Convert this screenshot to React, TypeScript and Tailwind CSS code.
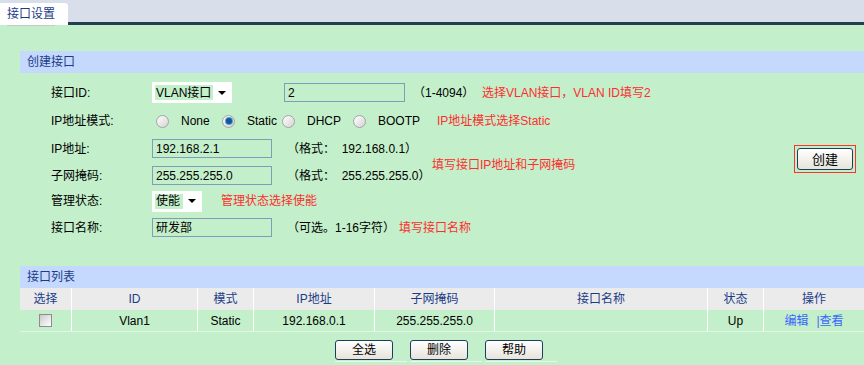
import React from 'react';

const labelCls = 'w-[101px] shrink-0 text-black';
const inputCls = 'h-[19px] border border-[#7f9db9] pl-[3px] flex items-center text-black';
const redCls = 'text-[#ff2d2d]';

function Select({ value, width, hlWidth }: { value: string; width: string; hlWidth: string }) {
  return (
    <div className={`flex h-[21px] items-center bg-white pl-[3px] ${width}`}>
      <span className={`flex h-[15px] items-center bg-[#c3efca] pl-[1px] text-black ${hlWidth}`}>{value}</span>
      <span className="ml-auto mr-[6px] h-0 w-0 border-x-[4px] border-t-[4px] border-x-transparent border-t-black" />
    </div>
  );
}

function Radio({ label, checked, width }: { label: string; checked?: boolean; width: string }) {
  return (
    <div className={`flex items-center ${width}`}>
      <span className="flex h-[13px] w-[13px] items-center justify-center rounded-full border border-[#a4a4a4] bg-gradient-to-br from-white to-[#d4d4d4]">
        {checked && <span className="h-[6px] w-[6px] rounded-full bg-[#0d5a9a] ring-1 ring-[#5d9bd0]" />}
      </span>
      <span className="ml-[12px] text-black">{label}</span>
    </div>
  );
}

function Button({ label }: { label: string }) {
  return (
    <div className="w-[72px] border-b border-[#eaf7ec] pb-[1px]">
      <button className="flex h-[20px] w-[58px] items-center justify-center rounded-[3px] border border-[#1c3f5e] bg-gradient-to-b from-white to-[#e6e4da] text-black">
        {label}
      </button>
    </div>
  );
}

const cols = [
  { name: '选择', w: 'w-[51px]' },
  { name: 'ID', w: 'w-[126px]' },
  { name: '模式', w: 'w-[56px]' },
  { name: 'IP地址', w: 'w-[121px]' },
  { name: '子网掩码', w: 'w-[120px]' },
  { name: '接口名称', w: 'w-[213px]' },
  { name: '状态', w: 'w-[56px]' },
  { name: '操作', w: 'flex-1' },
];

export default function App() {
  return (
    <div className="h-[365px] w-[864px] overflow-hidden bg-[#c3efca] font-['Liberation_Sans','Noto_Sans_CJK_SC',sans-serif] text-[12px] leading-none">
      {/* top tab bar */}
      <div className="flex h-[25px] bg-[#d9dfea]">
        <div className="mt-[3px] w-[68px] rounded-tr-[3px] bg-white pl-[7px]">
          <span className="mt-[4px] block w-[48px] border-b border-[#c9c9c9] pb-[3px] leading-[15px] text-[#1b3d87]">接口设置</span>
        </div>
        <div className="flex-1 border-b-[3px] border-[#22404f]" />
      </div>

      {/* 创建接口 */}
      <div className="ml-[20px] mt-[26px] flex h-[22px] items-center bg-[#c5d8fe] pl-[7px] text-[#1b3d87]">创建接口</div>

      <div className="flex">
        <div className="flex flex-1 flex-col pl-[51px]">
          <div className="mt-[9px] flex h-[21px] items-center">
            <span className={labelCls}>接口ID:</span>
            <Select value="VLAN接口" width="w-[80px]" hlWidth="w-[58px]" />
            <div className={`${inputCls} ml-[52px] w-[121px]`}>2</div>
            <span className="ml-[8px] w-[69px] text-black">（1-4094）</span>
            <span className={redCls}>选择VLAN接口，VLAN ID填写2</span>
          </div>

          <div className="flex h-[36px] items-center">
            <span className={labelCls}>IP地址模式:</span>
            <div className="ml-[4px] flex items-center">
              <Radio label="None" width="w-[66px]" />
              <Radio label="Static" checked width="w-[60px]" />
              <Radio label="DHCP" width="w-[71px]" />
              <Radio label="BOOTP" width="w-[84px]" />
            </div>
            <span className={redCls}>IP地址模式选择Static</span>
          </div>

          <div className="flex items-center">
            <div className="flex w-[381px] flex-col">
              <div className="flex h-[19px] items-center">
                <span className={labelCls}>IP地址:</span>
                <div className={`${inputCls} w-[120px]`}>192.168.2.1</div>
                <span className="ml-[15px] whitespace-pre text-black">（格式：  192.168.0.1）</span>
              </div>
              <div className="mt-[8px] flex h-[19px] items-center">
                <span className={labelCls}>子网掩码:</span>
                <div className={`${inputCls} w-[120px]`}>255.255.255.0</div>
                <span className="ml-[15px] whitespace-pre text-black">（格式：  255.255.255.0）</span>
              </div>
            </div>
            <span className={`${redCls} mt-[5px]`}>填写接口IP地址和子网掩码</span>
          </div>

          <div className="mt-[6px] flex h-[20px] items-center">
            <span className={labelCls}>管理状态:</span>
            <Select value="使能" width="w-[50px]" hlWidth="w-[28px]" />
            <span className={`${redCls} ml-[19px]`}>管理状态选择使能</span>
          </div>

          <div className="mt-[7px] flex h-[19px] items-center">
            <span className={labelCls}>接口名称:</span>
            <div className={`${inputCls} w-[120px]`}>研发部</div>
            <span className="ml-[15px] w-[112px] text-black">（可选。1-16字符）</span>
            <span className={redCls}>填写接口名称</span>
          </div>
        </div>

        <div className="w-[70px] pr-[8px] pt-[72px]">
          <div className="border border-[#ff3030] p-[2px]">
            <button className="flex h-[22px] w-full items-center justify-center rounded-[3px] border border-[#1c3f5e] bg-gradient-to-b from-white to-[#e6e4da] text-[13px] text-black">
              创建
            </button>
          </div>
        </div>
      </div>

      {/* 接口列表 */}
      <div className="ml-[20px] mt-[29px]">
        <div className="flex h-[22px] items-center bg-[#c5d8fe] pl-[7px] text-[#1b3d87]">接口列表</div>
        <div className="flex h-[22px] bg-[#ebebeb] text-[#1b3d87]">
          {cols.map((c, i) => (
            <div key={c.name} className={`flex items-center justify-center ${c.w} ${i > 0 ? 'border-l border-white' : ''}`}>
              {c.name}
            </div>
          ))}
        </div>
        <div className="flex h-[22px] border-b border-[#e3f3e6] text-black">
          <div className="flex w-[51px] items-center justify-center">
            <span className="h-[13px] w-[13px] border border-[#8d8d8d] bg-gradient-to-br from-[#c9c9c9] to-white p-[2px]">
              <span className="block h-full w-full bg-gradient-to-br from-[#d6d6d6] to-[#f5f5f5]" />
            </span>
          </div>
          <div className="flex w-[126px] items-center justify-center border-l border-white">Vlan1</div>
          <div className="flex w-[56px] items-center justify-center border-l border-white">Static</div>
          <div className="flex w-[121px] items-center justify-center border-l border-white">192.168.0.1</div>
          <div className="flex w-[120px] items-center justify-center border-l border-white">255.255.255.0</div>
          <div className="w-[213px] border-l border-white" />
          <div className="flex w-[56px] items-center justify-center border-l border-white">Up</div>
          <div className="flex flex-1 items-center justify-center border-l border-white text-[#3a66ff]">
            <span>编辑</span>
            <span className="ml-[8px]">|查看</span>
          </div>
        </div>
        <div className="mt-[8px] flex justify-center gap-[3px] pl-[8px]">
          <Button label="全选" />
          <Button label="删除" />
          <Button label="帮助" />
        </div>
      </div>
    </div>
  );
}
